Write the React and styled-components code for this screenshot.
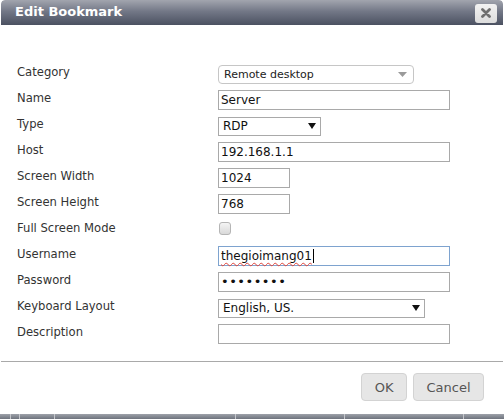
import React from "react";
import styled, { createGlobalStyle } from "styled-components";

const Global = createGlobalStyle`
  html, body { margin: 0; padding: 0; background: #ffffff; }
  body { width: 504px; height: 419px; overflow: hidden; font-family: "DejaVu Sans", Verdana, sans-serif; }
`;

const Page = styled.div`
  width: 504px;
  height: 419px;
  display: flex;
  flex-direction: column;
  background: #ffffff;
`;

const Dialog = styled.div`
  margin: 0 1px;
  height: 414px;
  display: flex;
  flex-direction: column;
  background: #ffffff;
  border-radius: 4px;
  overflow: hidden;
`;

const TitleBar = styled.div`
  height: 25px;
  flex: none;
  display: flex;
  align-items: center;
  justify-content: space-between;
  padding: 0 6px 0 14px;
  background: linear-gradient(to bottom, #a2a5ae 0%, #737887 45%, #4b5161 100%);
  border-radius: 4px 4px 0 0;
`;

const Title = styled.div`
  color: #ffffff;
  font-family: "DejaVu Sans", Verdana, sans-serif;
  font-weight: bold;
  font-size: 13px;
  margin-top: -3px;
`;

const CloseButton = styled.div`
  width: 22px;
  height: 19px;
  border-radius: 3px;
  background: linear-gradient(to bottom, #f2f2f2, #dcdcdc);
  display: flex;
  align-items: center;
  justify-content: center;
  margin-top: 1px;
`;

const Body = styled.div`
  padding: 36px 0 0 16px;
  display: grid;
  grid-template-columns: 201px 1fr;
  grid-auto-rows: 26px;
  align-items: center;
`;

const Label = styled.div`
  font-size: 11.6px;
  color: #333333;
  font-family: "DejaVu Sans", Verdana, sans-serif;
  margin-top: -4px;
`;

const Field = styled.div`
  display: flex;
  align-items: center;
`;

const TextBox = styled.div`
  box-sizing: border-box;
  width: ${(p) => p.$w}px;
  height: 20px;
  border: 1px solid ${(p) => (p.$focus ? "#7ea3cf" : "#a9a9a9")};
  background: #ffffff;
  font-size: 12px;
  color: #111111;
  padding: 0 2px;
  display: flex;
  align-items: center;
  font-family: "DejaVu Sans", Verdana, sans-serif;
  white-space: nowrap;
`;

const Spell = styled.span`
  text-decoration: underline wavy #e0443a;
  text-decoration-thickness: 1px;
  text-underline-offset: 2px;
`;

const Caret = styled.span`
  display: inline-block;
  width: 1px;
  height: 14px;
  background: #000000;
  margin-left: 1px;
`;

const Dots = styled.span`
  font-size: 13px;
  letter-spacing: 0.5px;
  color: #111;
  margin-top: -1px;
`;

const NativeSelect = styled.div`
  box-sizing: border-box;
  width: ${(p) => p.$w}px;
  height: 19px;
  border: 1px solid #a9a9a9;
  background: #ffffff;
  font-size: 12px;
  color: #111;
  padding: 0 4px 0 4px;
  display: flex;
  align-items: center;
  justify-content: space-between;
`;

const CategorySelect = styled.div`
  box-sizing: border-box;
  width: 196px;
  height: 19px;
  border: 1px solid #c6c6c6;
  border-radius: 4px;
  background: #ffffff;
  font-size: 11px;
  color: #222;
  padding: 0 6px 0 5px;
  display: flex;
  align-items: center;
  justify-content: space-between;
`;

const Check = styled.div`
  box-sizing: border-box;
  width: 12px;
  height: 13px;
  border: 1px solid #b5b5b5;
  border-radius: 3px;
  background: linear-gradient(to bottom, #f4f4f4, #d9d9d9);
  margin-left: 1px;
  margin-top: -3px;
`;

const Separator = styled.div`
  height: 1px;
  background: #a9a9a9;
  margin-top: 14px;
`;

const Footer = styled.div`
  display: flex;
  justify-content: flex-end;
  gap: 6px;
  padding: 11px 19px 0 0;
`;

const Button = styled.div`
  box-sizing: border-box;
  height: 28px;
  padding: 0 12.5px;
  display: flex;
  align-items: center;
  background: #e6e6e6;
  border: 1px solid #d3d3d3;
  border-radius: 4px;
  color: #555555;
  font-size: 13px;
  font-family: "DejaVu Sans", Verdana, sans-serif;
`;

const Backdrop = styled.div`
  flex: 1;
  background: linear-gradient(to bottom, #9ea2aa, #6e737d);
  display: flex;
`;

const BackCell = styled.div`
  width: ${(p) => p.$w}px;
  border-right: 1px solid #c4c6cb;
  flex: none;
`;

const Triangle = ({ color = "#111" }) => (
  <svg width="8" height="6" viewBox="0 0 8 6">
    <path d="M0 0 L8 0 L4 6 Z" fill={color} />
  </svg>
);

const rows = [
  ["Category", <CategorySelect><span>Remote desktop</span><svg width="9" height="5" viewBox="0 0 9 5"><path d="M0 0 L9 0 L4.5 5 Z" fill="#9a9a9a" /></svg></CategorySelect>],
  ["Name", <TextBox $w={232}>Server</TextBox>],
  ["Type", <NativeSelect $w={103}><span>RDP</span><Triangle /></NativeSelect>],
  ["Host", <TextBox $w={232}>192.168.1.1</TextBox>],
  ["Screen Width", <TextBox $w={72}>1024</TextBox>],
  ["Screen Height", <TextBox $w={72}>768</TextBox>],
  ["Full Screen Mode", <Check />],
  ["Username", <TextBox $w={232} $focus><Spell>thegioimang01</Spell><Caret /></TextBox>],
  ["Password", <TextBox $w={232}><Dots>••••••••</Dots></TextBox>],
  ["Keyboard Layout", <NativeSelect $w={207}><span>English, US.</span><Triangle /></NativeSelect>],
  ["Description", <TextBox $w={232} />],
];

export default function App() {
  return (
    <Page>
      <Global />
      <Dialog>
        <TitleBar>
          <Title>Edit Bookmark</Title>
          <CloseButton>
            <svg width="10" height="10" viewBox="0 0 10 10">
              <path d="M1.5 1.5 L8.5 8.5 M8.5 1.5 L1.5 8.5" stroke="#6f6f6f" strokeWidth="2.8" strokeLinecap="round" />
            </svg>
          </CloseButton>
        </TitleBar>
        <Body>
          {rows.map(([label, field]) => (
            <React.Fragment key={label}>
              <Label>{label}</Label>
              <Field>{field}</Field>
            </React.Fragment>
          ))}
        </Body>
        <Separator />
        <Footer>
          <Button>OK</Button>
          <Button>Cancel</Button>
        </Footer>
      </Dialog>
      <Backdrop>
        <BackCell $w={10} />
        <BackCell $w={8} />
        <BackCell $w={34} />
        <BackCell $w={180} />
        <BackCell $w={108} />
        <BackCell $w={118} />
      </Backdrop>
    </Page>
  );
}
